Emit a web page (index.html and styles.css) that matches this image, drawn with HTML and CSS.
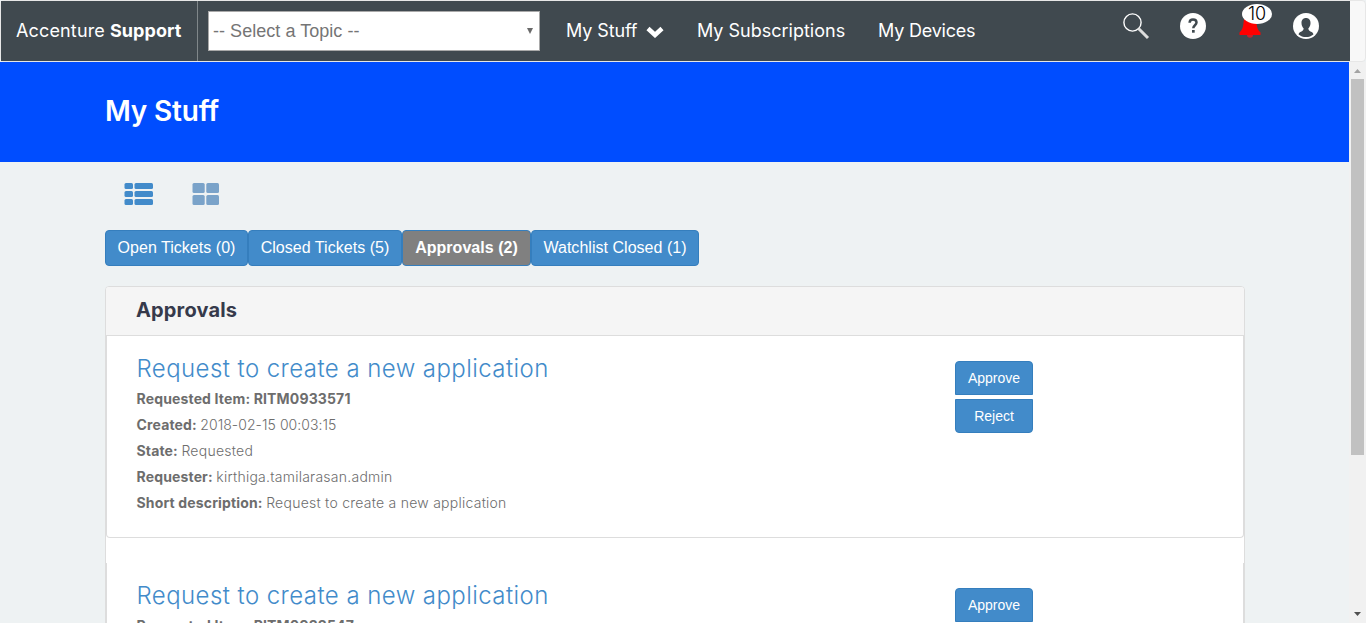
FILE: index.html
```html
<!DOCTYPE html>
<html lang="en">
<head>
<meta charset="utf-8">
<title>My Stuff</title>
<link rel="stylesheet" href="styles.css">
</head>
<body>
<header class="navbar">
  <div class="bar">
    <a class="brand"><span class="brand-name">Accenture</span><b class="brand-unit">Support</b></a>
    <div class="topic"><span class="topic-label">-- Select a Topic --</span><svg width="6" height="6" viewBox="0 0 6 6"><path d="M0 0h6L3 6z" fill="#6a6a6a"/></svg></div>
    <nav class="links">
      <a class="link link-stuff"><span class="t-stuff">My Stuff</span><svg class="chev" width="18" height="12" viewBox="0 0 18 12"><path d="M2 2.500l7 6.500 7-6.500" fill="none" stroke="#fff" stroke-width="4.500"/></svg></a>
      <a class="link link-subs"><span class="t-subs">My Subscriptions</span></a>
      <a class="link link-dev"><span class="t-dev">My Devices</span></a>
    </nav>
    <div class="tools">
      <svg width="27" height="27" viewBox="0 0 27 27"><circle cx="9.500" cy="9.500" r="8.600" fill="none" stroke="#fff" stroke-width="1.400"/><path d="M15.500 15.500L25 25" stroke="#ddd" stroke-width="3"/></svg>
      <svg width="26" height="26" viewBox="0 0 26 26"><circle cx="13" cy="13" r="13" fill="#fff"/><path d="M9.600 9.800C9.700 7.500 11 6.500 13 6.500c2.200 0 3.500 1.200 3.500 3 0 2.700-3.200 2.800-3.200 5.800" fill="none" stroke="#40494f" stroke-width="2.500"/><path d="M12 17h2.700v2.700H12z" fill="#40494f"/></svg>
      <div class="bell">
        <svg width="22" height="27" viewBox="0 0 22 27"><path d="M11 0C6 1 5 5 4.500 10S3 17 0.500 19.500V22h21v-2.500C19 17 18 15 17.500 10S16 1 11 0z" fill="#f00"/><path d="M8 22a3 2.800 0 0 0 6 0z" fill="#c8202a"/></svg>
        <span class="count">10</span>
      </div>
      <svg width="26" height="26" viewBox="0 0 26 26"><circle cx="13" cy="13" r="13" fill="#fff"/><path d="M13 5c3 0 4.600 2.200 4.500 5.200-.1 2.400-1 4-2.200 5.300.2 2.200 1.600 2.700 3.400 3.400 1 .4 1.600 1.200 1.700 2.600-2 1.700-4.500 2.600-7.400 2.600s-5.400-.9-7.400-2.600c.1-1.400.7-2.200 1.700-2.600 1.800-.7 3.200-1.200 3.400-3.400-1.200-1.300-2.100-2.900-2.200-5.300C8.400 7.200 10 5 13 5z" fill="#40494f"/></svg>
    </div>
  </div>
</header>
<div class="page">
  <main class="content">
    <div class="hero"><h1><span class="t-h1">My Stuff</span></h1></div>
    <div class="container">
      <div class="views">
        <svg width="29" height="22" viewBox="0 0 29 22" fill="#428bca"><rect x="0.500" width="8.500" height="6" rx="1.500"/><rect x="10.500" width="18.500" height="6" rx="1.500"/><rect x="0.500" y="8" width="8.500" height="6" rx="1.500"/><rect x="10.500" y="8" width="18.500" height="6" rx="1.500"/><rect x="0.500" y="16" width="8.500" height="6" rx="1.500"/><rect x="10.500" y="16" width="18.500" height="6" rx="1.500"/></svg>
        <svg width="27" height="22" viewBox="0 0 27 22" fill="#7aa3c9"><rect x="0.500" width="12.200" height="10" rx="1.500"/><rect x="14.300" width="12.700" height="10" rx="1.500"/><rect x="0.500" y="12" width="12.200" height="10" rx="1.500"/><rect x="14.300" y="12" width="12.700" height="10" rx="1.500"/></svg>
      </div>
      <div class="tabs">
        <button class="tab tab-open">Open Tickets (0)</button><button class="tab tab-closed">Closed Tickets (5)</button><button class="tab tab-active">Approvals (2)</button><button class="tab tab-watch">Watchlist Closed (1)</button>
      </div>
      <section class="panel">
        <h2><span class="t-h2">Approvals</span></h2>
        <article class="item">
          <div class="details">
            <h3><span class="t-h3">Request to create a new application</span></h3>
            <p><b class="b1">Requested Item: RITM0933571</b></p>
            <p><b>Created:</b><span class="v2">2018-02-15 00:03:15</span></p>
            <p><b>State:</b><span>Requested</span></p>
            <p><b>Requester:</b><span>kirthiga.tamilarasan.admin</span></p>
            <p><b>Short description:</b><span>Request to create a new application</span></p>
          </div>
          <div class="actions"><button class="act first">Approve</button><button class="act last">Reject</button></div>
        </article>
        <article class="item next">
          <div class="details">
            <h3><span class="t-h3">Request to create a new application</span></h3>
            <p><b class="b1">Requested Item: RITM0933547</b></p>
          </div>
          <div class="actions"><button class="act first">Approve</button></div>
        </article>
      </section>
    </div>
  </main>
  <div class="scroll">
    <svg width="17" height="17" viewBox="0 0 17 17"><path d="M5 11h7L8.500 7z" fill="#a3a3a3"/></svg>
    <div class="thumb"></div>
    <svg class="down" width="17" height="17" viewBox="0 0 17 17"><path d="M5 6h7L8.500 10z" fill="#505050"/></svg>
  </div>
</div>
</body>
</html>
```
FILE: styles.css
```css
* { box-sizing: border-box; }
body { margin: 0; height: 623px; overflow: hidden; display: flex; flex-direction: column; font-family: Inter, "Liberation Sans", sans-serif; background: #eef2f3; color: #6d6d6d; }
h1, h2, h3, p { margin: 0; font-weight: 400; }
span, b { white-space: nowrap; }
svg { display: block; flex: none; }
button { font-family: "Liberation Sans", Arial, sans-serif; color: #fff; background: #428bca; border: 1px solid #357ebd; padding: 0; }
.navbar { flex: none; height: 62px; border: 1px solid #e7e7e7; border-radius: 4px; background: #f8f8f8; }
.bar { width: 1349px; height: 60px; background: #40494f; display: flex; color: #fff; font-size: 18px; }
.brand { width: 197px; border-right: 1px solid #80878a; padding: 0 0 2px 15px; display: flex; align-items: center; gap: 5px; }
.brand-name { letter-spacing: 0.15px; }
.brand-unit { letter-spacing: 0.07px; }
.topic { width: 332px; height: 40px; margin: 10px 0 0 10px; background: #fff; border: 1px solid #a9a9a9; color: #757575; font: 18px "Liberation Sans", Arial, sans-serif; letter-spacing: 0.04px; display: flex; align-items: center; justify-content: space-between; padding: 0 6px 0 4px; }
.links { display: flex; align-items: center; padding: 0 0 2px 26px; width: 553px; }
.link { display: flex; align-items: center; }
.link-stuff { width: 131px; gap: 9px; }
.link-subs { width: 181px; }
.t-stuff { letter-spacing: -0.1px; }
.t-dev { letter-spacing: -0.2px; }
.chev { margin-top: 4px; }
.tools { display: flex; padding: 12px 0 0 30px; }
.tools > svg:first-child { margin-right: 30px; }
.bell { position: relative; margin: 0 32px 0 33px; }
.count { position: absolute; left: 3px; top: -9px; width: 30px; height: 20px; border-radius: 50%; background: #fff; color: #000; text-align: center; line-height: 20px; font-size: 18px; font-weight: 300; }
.page { display: flex; flex: 1; min-height: 0; }
.content { width: 1349px; overflow: hidden; }
.hero { height: 100px; background: #004dff; padding-left: 105px; }
h1 { color: #fff; font-size: 28px; font-weight: 600; line-height: 99px; letter-spacing: -0.2px; }
.container { width: 1140px; margin-left: 105px; }
.views { display: flex; gap: 39px; padding: 21px 0 25px 19px; }
.tabs { display: flex; height: 36px; }
.tab { height: 36px; border-radius: 4px; font-size: 16px; letter-spacing: 0.03px; }
.tab-open { width: 143px; }
.tab-closed { width: 154px; }
.tab-active { width: 129px; background: #808080; font-weight: 700; }
.tab-watch { width: 168px; }
.panel { margin-top: 20px; height: 400px; border: 1px solid #ddd; border-radius: 4px; background: #fff; overflow: hidden; }
h2 { height: 49px; background: #f5f5f5; border-bottom: 1px solid #ddd; padding-left: 30px; line-height: 47px; font-size: 20px; font-weight: 700; letter-spacing: 0.15px; color: #363a4b; }
.item { height: 202px; display: flex; border: 1px solid #ddd; border-top: 0; border-radius: 0 0 4px 4px; padding: 18px 0 0 29.500px; }
.next { margin-top: 25px; }
.details { width: 818.500px; }
h3 { height: 32px; line-height: 30px; font-size: 24px; font-weight: 300; letter-spacing: 0.43px; color: #428bca; }
p { height: 26px; line-height: 26px; font-size: 14px; font-weight: 300; letter-spacing: 0.25px; display: flex; gap: 3.500px; }
b { font-weight: 700; }
p b { letter-spacing: 0.15px; }
.v2 { letter-spacing: 0.05px; }
.actions { padding-top: 7px; display: flex; flex-direction: column; gap: 4px; }
.act { width: 78px; height: 34px; flex: none; font-size: 14px; }
.first { border-radius: 4px 4px 0 0; }
.last { border-radius: 0 0 4px 4px; }
.scroll { width: 17px; background: #f1f1f1; display: flex; flex-direction: column; }
.thumb { height: 376px; margin: 0 2px; background: #c1c1c1; }
.down { margin-top: auto; }
```
